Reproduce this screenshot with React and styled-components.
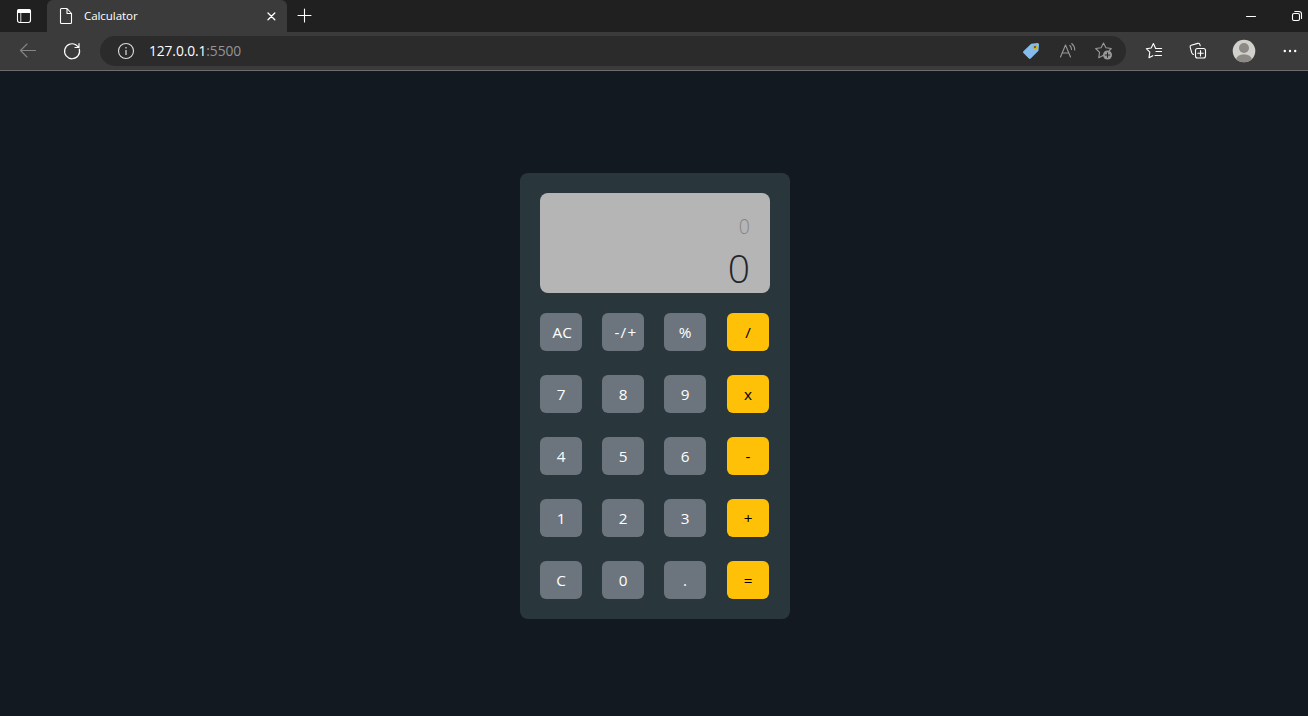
import React from 'react';
import styled, { createGlobalStyle } from 'styled-components';

const GlobalStyle = createGlobalStyle`
  * { box-sizing: border-box; }
  html, body { margin: 0; padding: 0; }
  body { font-family: "Segoe UI", "Open Sans", "Noto Sans", sans-serif; overflow: hidden; background: #121920; }
  svg { display: block; flex: none; }
`;

const Window = styled.div`
  width: 1308px;
  height: 716px;
  display: flex;
  flex-direction: column;
`;

const TitleBar = styled.header`
  height: 32px;
  display: flex;
  background: #202020;
  color: #fff;
`;

const TabActions = styled.div`
  width: 47px;
  padding: 8px 0 0 16px;
`;

const Tab = styled.div`
  width: 240px;
  height: 32px;
  display: flex;
  align-items: center;
  padding: 0 10px 0 12px;
  border-radius: 6px 6px 0 0;
  background: #3b3b3b;
`;

const TabTitle = styled.span`
  flex: 1;
  margin-left: 11px;
  font-size: 11.6px;
  line-height: 16px;
  letter-spacing: -0.1px;
`;

const NewTab = styled.div`
  padding: 8px 0 0 10px;
`;

const WindowControls = styled.div`
  display: flex;
  gap: 32px;
  margin-left: auto;
  padding: 8px 5px 0 0;
`;

const Toolbar = styled.nav`
  height: 39px;
  display: flex;
  align-items: center;
  padding-left: 18px;
  background: #3b3b3b;
  border-bottom: 1px solid #6b6d6e;
`;

const NavButtons = styled.div`
  width: 82px;
  display: flex;
  gap: 24px;
`;

const AddressBar = styled.div`
  width: 1026px;
  height: 30px;
  display: flex;
  align-items: center;
  padding: 0 12px 0 16px;
  border-radius: 15px;
  background: #2b2b2b;
`;

const Url = styled.div`
  flex: 1;
  margin-left: 13px;
  font-size: 13.8px;
  line-height: 20px;
  letter-spacing: -0.1px;
  color: #fff;
`;

const Port = styled.span`
  color: #949494;
`;

const AddressActions = styled.div`
  display: flex;
  gap: 16px;
`;

const BrowserActions = styled.div`
  display: flex;
  align-items: center;
  margin-left: 18px;
  gap: 24px;
`;

const Page = styled.main`
  flex: 1;
  display: flex;
  justify-content: center;
  align-items: flex-start;
  padding: 102px 0 0 2px;
  background: #121920;
`;

const Calculator = styled.section`
  width: 270px;
  height: 446px;
  padding: 20px;
  border-radius: 8px;
  background: #29363b;
`;

const Display = styled.div`
  height: 100px;
  padding: 18px 20px 0;
  border-radius: 8px;
  background: #b5b5b5;
  text-align: right;
  font-weight: 300;
`;

const History = styled.div`
  height: 30px;
  font-size: 19.5px;
  line-height: 31px;
  color: #858585;
`;

const Result = styled.div`
  height: 52px;
  font-size: 39px;
  line-height: 54px;
  color: #212529;
`;

const Keypad = styled.div`
  display: grid;
  grid-template-columns: 62px 62px 63px 42px;
  justify-items: start;
  row-gap: 24px;
  margin-top: 20px;
`;

const Key = styled.button`
  width: 42px;
  height: 38px;
  padding: ${({ $wide }) => ($wide ? '0 0 0 12.5px' : '0')};
  border: 0;
  border-radius: 6px;
  background: ${({ $operator }) => ($operator ? '#ffc107' : '#6c757d')};
  color: ${({ $operator }) => ($operator ? '#000' : '#fff')};
  font: 400 15.3px/38px "Segoe UI", "Open Sans", "Noto Sans", sans-serif;
  text-align: ${({ $wide }) => ($wide ? 'left' : 'center')};
  letter-spacing: ${({ $spacing }) => $spacing || '0'};
  white-space: nowrap;
`;

const keys = ['AC', '-/+', '%', '/', '7', '8', '9', 'x', '4', '5', '6', '-', '1', '2', '3', '+', 'C', '0', '.', '='];
const operators = ['/', 'x', '-', '+', '='];
const spacings = { '-/+': '1.2px' };

const Icon = ({ size = 20, color = '#fff', stroke = 1.1, children }) => (
  <svg width={size} height={size} viewBox={`0 0 ${size} ${size}`} fill="none" stroke={color}
    strokeWidth={stroke} strokeLinecap="round" strokeLinejoin="round">{children}</svg>
);

export default function App() {
  return (
    <Window>
      <GlobalStyle />
      <TitleBar>
        <TabActions>
          <Icon size={16}>
            <rect x="1.5" y="1.5" width="13" height="13" rx="2.2" />
            <path d="M1.5 4V3.4Q1.5 1.5 3.4 1.5h9.2q1.9 0 1.9 1.9V4.5h-13z" fill="#fff" />
            <path d="M4.8 5v9.5" strokeWidth="0.8" />
          </Icon>
        </TabActions>
        <Tab>
          <svg width="14" height="18" viewBox="0 0 14 18" fill="none" stroke="#fff" strokeWidth="1.1" strokeLinejoin="round">
            <path d="M3 1.5h5l4.5 5v9q0 1-1 1H2.500q-1 0-1-1v-13q0-1 1-1zM8 1.500v5h4.500" />
          </svg>
          <TabTitle>Calculator</TabTitle>
          <Icon size={12} stroke={1.3}><path d="M3 3l6.800 6.800m0-6.800L3 9.800" /></Icon>
        </Tab>
        <NewTab><Icon size={16}><path d="M7.500 1v13M1 7.500h13" /></Icon></NewTab>
        <WindowControls>
          <Icon size={14} stroke={1}><path d="M4.500 8.500h9" /></Icon>
          <Icon size={15}>
            <rect x="4.500" y="5.500" width="7" height="7" rx="1.500" />
            <path d="M6.800 3.500h4.200q2.500 0 2.500 2.500v4.500" />
          </Icon>
        </WindowControls>
      </TitleBar>

      <Toolbar>
        <NavButtons>
          <Icon color="#858585"><path d="M17.500 9.500h-15M9 3L2.500 9.500 9 16" /></Icon>
          <Icon stroke={1.200}><path d="M17.300 8.200A7.500 7.500 0 1 1 13.700 3.700L17 6.400M17 2.500v4h-4" /></Icon>
        </NavButtons>
        <AddressBar>
          <Icon color="#ddd">
            <circle cx="10" cy="10" r="7.500" />
            <path d="M10 9v5M10 6v1.500" stroke="#bbb" strokeWidth="1.500" strokeLinecap="butt" />
          </Icon>
          <Url>127.0.0.1<Port>:5500</Port></Url>
          <AddressActions>
            <svg width="20" height="20" viewBox="0 0 20 20">
              <path d="M9.200 2.700L15.500 2q1.600 0 1.500 1.600l-.5 6.100L8.700 17.600q-.9.900-1.800 0L1.400 12q-.9-.9 0-1.800z" fill="#83bced" />
              <circle cx="13" cy="6" r="1.700" fill="#38546b" stroke="#d9ad16" strokeWidth="1.300" />
            </svg>
            <Icon color="#999">
              <path d="M2.500 16L7.500 4l5 12M4.200 12h6.600M11.800 4.500q1.700 1.500 1.700 4M13.700 2.500q3 2.400 3 6.500" />
            </Icon>
            <Icon color="#999">
              <path d="M9.500 14.200l-4.800 2.500.9-5.400-3.900-3.800 5.400-.8L9.500 2l2.400 4.700 5.400.8-2 2" />
              <circle cx="13.500" cy="14" r="4.500" fill="#999" stroke="none" />
              <path d="M13.500 11.700v4.600M11.200 14h4.600" stroke="#2b2b2b" />
            </Icon>
          </AddressActions>
        </AddressBar>
        <BrowserActions>
          <Icon>
            <path d="M11 6L9.400 2.500 7.200 7l-4.900.7L5.800 11.200 5 16.700l3.800-2M11 6l.6 1.500h6M12 10.500h5.500M11 14.500h6.500" />
          </Icon>
          <Icon>
            <rect x="7.500" y="7.500" width="10" height="9.500" rx="2" />
            <path d="M12.500 9.500v5.500M9.800 12.300h5.400M5.500 13.500q-1.300-.4-1.700-1.600L2.200 6.300q-.5-1.600 1-2.100L9.700 2.400q1.600-.4 2.100 1l.4 1.300" />
          </Icon>
          <svg width="24" height="24" viewBox="0 0 24 24">
            <defs><clipPath id="avatar-clip"><circle cx="12" cy="12" r="11.300" /></clipPath></defs>
            <circle cx="12" cy="12" r="11.300" fill="#d2d0cc" />
            <g clipPath="url(#avatar-clip)" fill="#8d8985">
              <circle cx="12" cy="9" r="5" /><ellipse cx="12" cy="20.500" rx="7.800" ry="5.300" />
            </g>
          </svg>
          <svg width="20" height="20" viewBox="0 0 20 20" fill="#fff">
            <circle cx="4.800" cy="10" r="1.200" /><circle cx="10" cy="10" r="1.200" /><circle cx="15.200" cy="10" r="1.200" />
          </svg>
        </BrowserActions>
      </Toolbar>

      <Page>
        <Calculator>
          <Display>
            <History>0</History>
            <Result>0</Result>
          </Display>
          <Keypad>
            {keys.map((key) => (
              <Key
                key={key}
                $operator={operators.includes(key)}
                $wide={key.length > 1}
                $spacing={spacings[key]}
              >
                {key}
              </Key>
            ))}
          </Keypad>
        </Calculator>
      </Page>
    </Window>
  );
}
